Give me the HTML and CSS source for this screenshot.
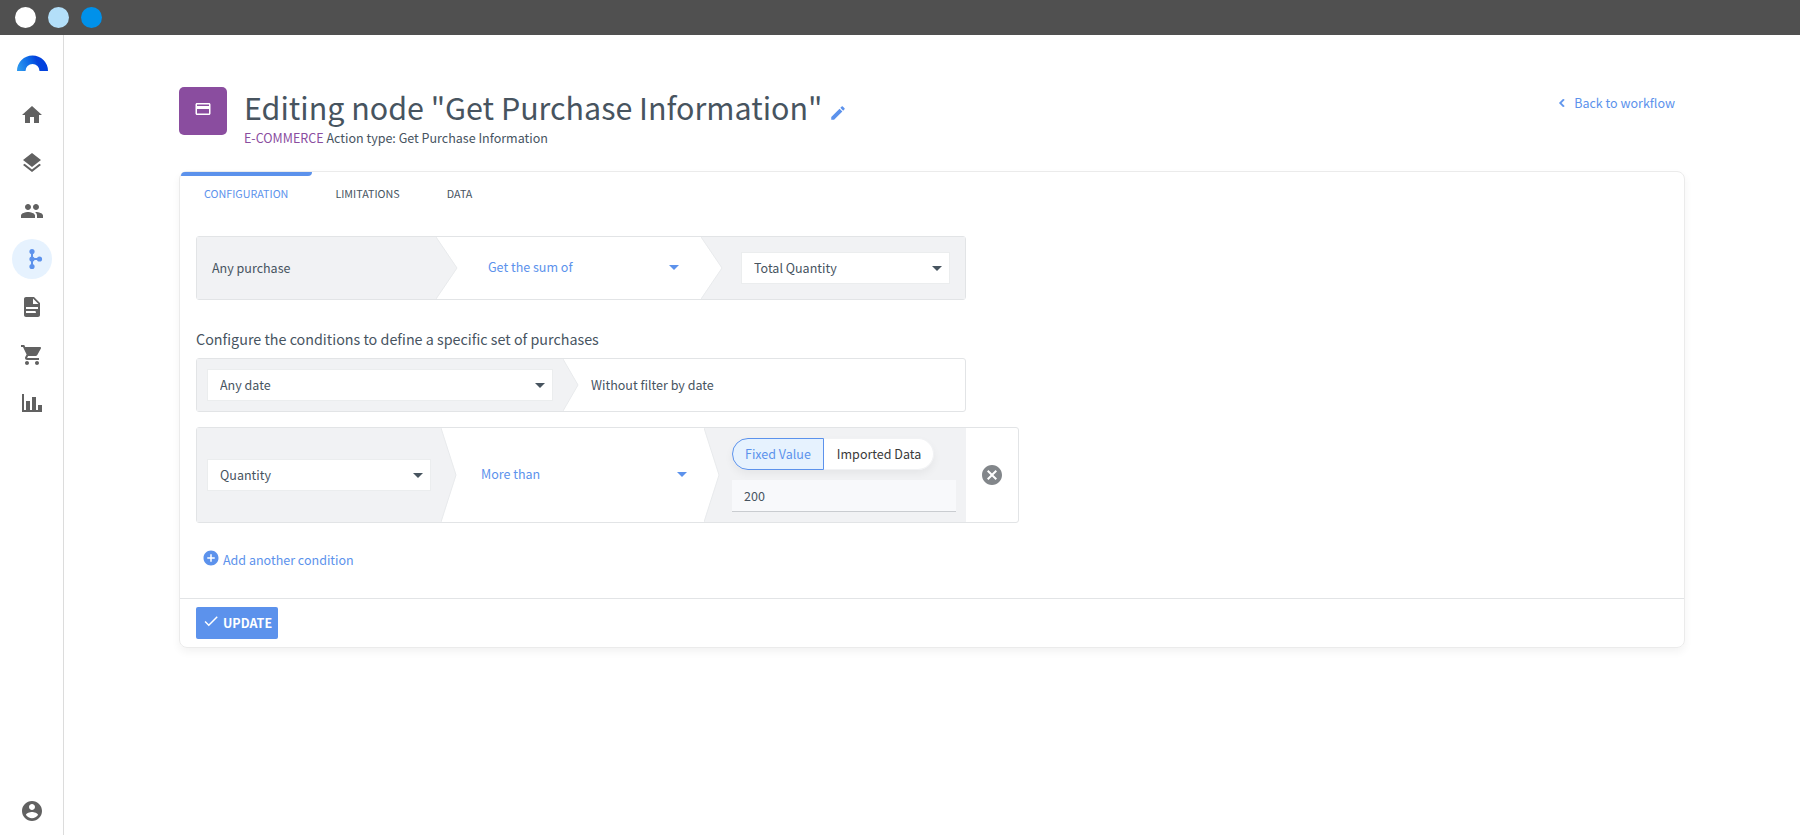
FILE: index.html
```html
<!DOCTYPE html>
<html lang="en">
<head>
<meta charset="utf-8">
<title>Editing node</title>
<link rel="stylesheet" href="styles.css">
</head>
<body>
<div class="topbar">
  <span class="dot dot-white"></span>
  <span class="dot dot-light"></span>
  <span class="dot dot-blue"></span>
</div>
<div class="shell">
  <nav class="sidebar" aria-label="Main">
    <a class="logo" href="#" aria-label="Dashboard">
      <svg width="32" height="16" viewBox="0 0 32 16">
        <defs><linearGradient id="arc" x1="0" x2="1" y1="0.5" y2="0.3"><stop offset="0" stop-color="#2b96ee"/><stop offset="0.45" stop-color="#0a63e6"/><stop offset="0.65" stop-color="#0443dc"/><stop offset="1" stop-color="#0040e0"/></linearGradient></defs>
        <path fill="url(#arc)" d="M1 16a15.5 15.5 0 0 1 31 0H23.500a7 7 0 0 0-14 0z"/>
      </svg>
    </a>
    <a class="nav-item" href="#" aria-label="Home"><svg viewBox="0 0 24 24"><path d="M10 20v-6h4v6h5v-8h3L12 3 2 12h3v8z"/></svg></a>
    <a class="nav-item" href="#" aria-label="Layers"><svg viewBox="0 0 24 24"><path d="M11.99 18.54l-7.37-5.73L3 14.07l9 7 9-7-1.63-1.27-7.38 5.74zM12 16l7.36-5.73L21 9l-9-7-9 7 1.63 1.27L12 16z"/></svg></a>
    <a class="nav-item" href="#" aria-label="Audience"><svg viewBox="0 0 24 24"><path d="M16 11c1.66 0 2.99-1.34 2.99-3S17.66 5 16 5c-1.66 0-3 1.34-3 3s1.34 3 3 3zm-8 0c1.66 0 2.99-1.34 2.99-3S9.66 5 8 5C6.34 5 5 6.34 5 8s1.34 3 3 3zm0 2c-2.33 0-7 1.17-7 3.5V19h14v-2.5c0-2.33-4.67-3.5-7-3.5zm8 0c-.29 0-.62.02-.97.05 1.16.84 1.97 1.97 1.97 3.45V19h6v-2.5c0-2.33-4.67-3.5-7-3.5z"/></svg></a>
    <a class="nav-item nav-active" href="#" aria-label="Workflows"><svg viewBox="0 0 24 24"><path d="M12 4.500v15M12 12h7.500" stroke="currentColor" stroke-width="2"/><circle cx="12" cy="4.500" r="2.600"/><circle cx="12" cy="12" r="2.600"/><circle cx="12" cy="19.500" r="2.600"/><circle cx="19.500" cy="12" r="2.600"/></svg></a>
    <a class="nav-item" href="#" aria-label="Documents"><svg viewBox="0 0 24 24"><path d="M14 2H6c-1.100 0-1.990.9-1.990 2L4 20c0 1.100.89 2 1.990 2H18c1.100 0 2-.9 2-2V8l-6-6zm2 16H6v-2h9.500zm2-4H6v-2h12zm-5-5V3.500L18.500 9H13z"/></svg></a>
    <a class="nav-item" href="#" aria-label="Commerce"><svg viewBox="0 0 24 24"><path d="M7 18c-1.100 0-1.990.9-1.990 2S5.900 22 7 22s2-.9 2-2-.9-2-2-2zM1 2v2h2l3.600 7.590-1.350 2.450c-.16.280-.25.610-.25.960 0 1.100.9 2 2 2h12v-2H7.420c-.14 0-.25-.11-.25-.25l.03-.12.900-1.630h7.450c.75 0 1.410-.41 1.750-1.030l3.580-6.490c.08-.14.120-.31.120-.480 0-.55-.45-1-1-1H5.210l-.94-2H1zm16 16c-1.100 0-1.990.9-1.990 2s.89 2 1.990 2 2-.9 2-2-.9-2-2-2z"/></svg></a>
    <a class="nav-item" href="#" aria-label="Statistics"><svg viewBox="0 0 24 24"><path d="M2 3h2v16h2v-9h4v9h2V6h4v13h2v-5h4v7H2z"/></svg></a>
    <a class="nav-item nav-account" href="#" aria-label="Account"><svg viewBox="0 0 24 24"><path d="M12 2C6.480 2 2 6.480 2 12s4.480 10 10 10 10-4.480 10-10S17.520 2 12 2zm0 3c1.660 0 3 1.340 3 3s-1.340 3-3 3-3-1.340-3-3 1.340-3 3-3zm0 14.200c-2.500 0-4.710-1.280-6-3.220.03-1.990 4-3.080 6-3.080 1.990 0 5.970 1.090 6 3.080-1.290 1.940-3.500 3.220-6 3.220z"/></svg></a>
  </nav>

  <main class="main">
    <header class="page-head">
      <div class="node-icon"><svg width="18" height="18" viewBox="0 0 24 24"><path fill="#fff" d="M20 4H4c-1.110 0-1.990.89-1.990 2L2 18c0 1.110.89 2 2 2h16c1.110 0 2-.89 2-2V6c0-1.110-.89-2-2-2zm0 14H4v-6h16v6zm0-10H4V6h16v2z"/></svg></div>
      <div class="head-text">
        <div class="title-row">
          <h1>Editing node "Get Purchase Information"</h1>
          <button class="icon-btn" type="button" aria-label="Edit name"><svg width="18" height="18" viewBox="0 0 24 24"><path fill="#5c92ec" d="M3 17.250V21h3.750L17.810 9.940l-3.750-3.750L3 17.250zM20.710 7.040c.39-.39.39-1.020 0-1.410l-2.340-2.340c-.39-.39-1.020-.39-1.410 0l-1.830 1.830 3.750 3.750 1.830-1.830z"/></svg></button>
        </div>
        <p class="subtitle"><span class="category">E-COMMERCE</span> Action type: Get Purchase Information</p>
      </div>
      <a class="back" href="#"><svg width="16" height="16" viewBox="0 0 24 24"><path fill="currentColor" stroke="currentColor" d="M15.410 7.410L14 6l-6 6 6 6 1.410-1.410L10.830 12z"/></svg>Back to workflow</a>
    </header>

    <section class="card">
      <div class="tabs" role="tablist">
        <button class="tab tab-active" type="button" role="tab" aria-selected="true">CONFIGURATION</button>
        <button class="tab" type="button" role="tab" aria-selected="false">LIMITATIONS</button>
        <button class="tab" type="button" role="tab" aria-selected="false">DATA</button>
      </div>

      <form class="card-body">
        <div class="rule rule-sum">
          <div class="cell gray cell-label">Any purchase</div>
          <svg class="chevron" viewBox="0 0 22 62" preserveAspectRatio="none"><path class="fill" d="M0 0L21 31L0 62z"/><path class="edge" d="M0 0L21 31L0 62"/></svg>
          <div class="cell cell-op"><span class="pick pick-link"><select aria-label="Operation"><option>Get the sum of</option></select></span></div>
          <svg class="chevron" viewBox="0 0 22 62" preserveAspectRatio="none"><path class="fill" d="M0 0H22V62H0L21 31z"/><path class="edge" d="M0 0L21 31L0 62"/></svg>
          <div class="cell gray cell-field"><span class="pick"><select aria-label="Field"><option>Total Quantity</option></select></span></div>
        </div>

        <h2>Configure the conditions to define a specific set of purchases</h2>

        <div class="rule rule-date">
          <div class="cell gray cell-date"><span class="pick"><select aria-label="Date"><option>Any date</option></select></span></div>
          <svg class="chevron chevron-small" viewBox="0 0 16 52" preserveAspectRatio="none"><path class="fill" d="M0 0L15 26L0 52z"/><path class="edge" d="M0 0L15 26L0 52"/></svg>
          <div class="cell cell-note">Without filter by date</div>
        </div>

        <div class="rule rule-quantity">
          <div class="cell gray cell-prop"><span class="pick"><select aria-label="Property"><option>Quantity</option></select></span></div>
          <svg class="chevron chevron-small" viewBox="0 0 16 94" preserveAspectRatio="none"><path class="fill" d="M0 0L15 47L0 94z"/><path class="edge" d="M0 0L15 47L0 94"/></svg>
          <div class="cell cell-compare"><span class="pick pick-link"><select aria-label="Comparison"><option>More than</option></select></span></div>
          <svg class="chevron chevron-small" viewBox="0 0 16 94" preserveAspectRatio="none"><path class="fill" d="M0 0H16V94H0L15 47z"/><path class="edge" d="M0 0L15 47L0 94"/></svg>
          <div class="cell gray cell-value">
            <div class="toggle">
              <button class="toggle-btn toggle-on" type="button">Fixed Value</button>
              <button class="toggle-btn" type="button">Imported Data</button>
            </div>
            <input class="value" type="text" value="200" aria-label="Value">
          </div>
          <div class="cell cell-remove"><button class="icon-btn" type="button" aria-label="Remove condition"><svg width="24" height="24" viewBox="0 0 24 24"><path fill="#82868a" d="M12 2C6.470 2 2 6.470 2 12s4.470 10 10 10 10-4.470 10-10S17.530 2 12 2zm5 13.590L15.590 17 12 13.410 8.410 17 7 15.590 10.590 12 7 8.410 8.410 7 12 10.590 15.590 7 17 8.410 13.410 12 17 15.590z"/></svg></button></div>
        </div>

        <button class="add" type="button"><svg width="18" height="18" viewBox="0 0 24 24"><path fill="currentColor" d="M12 2C6.480 2 2 6.480 2 12s4.480 10 10 10 10-4.480 10-10S17.520 2 12 2zm5 11h-4v4h-2v-4H7v-2h4V7h2v4h4v2z"/></svg>Add another condition</button>
      </form>

      <footer class="card-foot">
        <button class="update" type="button"><svg width="18" height="18" viewBox="0 0 24 24"><path fill="currentColor" d="M9 16.170L4.830 12l-1.420 1.410L9 19 21 7l-1.410-1.410z"/></svg>UPDATE</button>
      </footer>
    </section>
  </main>
</div>
</body>
</html>
```
FILE: styles.css
```css
* { box-sizing: border-box; }

body {
  margin: 0;
  min-height: 100vh;
  display: flex;
  flex-direction: column;
  background: #fff;
  color: #47545f;
  font: 14px/20px "Noto Sans CJK SC", "Noto Sans", sans-serif;
  font-size-adjust: 0.486;
}

button, input, select {
  font: inherit;
  font-size-adjust: inherit;
  color: inherit;
  margin: 0;
}

button { cursor: pointer; }
a { text-decoration: none; }
svg { display: block; flex: none; }

.topbar {
  height: 35px;
  padding: 0 15px 1px;
  display: flex;
  align-items: center;
  gap: 12px;
  background: #505050;
}

.dot { width: 21px; height: 21px; border-radius: 50%; }
.dot-white { background: #fff; }
.dot-light { background: #b3dff9; }
.dot-blue { background: #0091ea; }

.shell { flex: 1; display: flex; }

.sidebar {
  width: 64px;
  padding: 20px 0 4px 1px;
  border-right: 1px solid #dcdcdc;
  display: flex;
  flex-direction: column;
  align-items: center;
  gap: 8px;
}

.logo { margin-bottom: 16px; }

.nav-item {
  width: 40px;
  height: 40px;
  border-radius: 50%;
  display: flex;
  align-items: center;
  justify-content: center;
  color: #616161;
}

.nav-item svg { width: 24px; height: 24px; fill: currentColor; }
.nav-active { background: #e6f2fe; color: #5c92ec; }
.nav-account { margin-top: auto; }

.main { flex: 1; padding: 52px 115px 40px; }

.page-head { display: flex; gap: 17px; margin-bottom: 24px; }

.node-icon {
  width: 48px;
  height: 48px;
  padding-bottom: 4px;
  border-radius: 5px;
  background: #8a4d9f;
  display: flex;
  align-items: center;
  justify-content: center;
}

.head-text { flex: 1; }
.title-row { display: flex; align-items: flex-end; gap: 7px; }
h1 { margin: 0; font-size: 34px; font-weight: 400; line-height: 40px; }

.icon-btn { padding: 0; border: 0; background: none; }
.title-row .icon-btn { padding-bottom: 5px; }

.subtitle { margin: 2px 0 0; line-height: 18px; }
.category { color: #8a4d9f; }

.back {
  display: flex;
  align-items: center;
  align-self: flex-start;
  gap: 4px;
  padding: 6px 10px;
  color: #5c92ec;
}

.card {
  border: 1px solid #ebebeb;
  border-radius: 8px;
  box-shadow: 0 4px 8px rgba(0, 0, 0, 0.05);
}

.tabs { display: flex; padding-left: 1px; }

.tab {
  position: relative;
  padding: 12px 24px 8px 23px;
  border: 0;
  background: none;
  font-size: 12px;
  line-height: 20px;
}

.tab-active { color: #5c92ec; }

.tab-active::before {
  content: "";
  position: absolute;
  top: 0;
  left: 0;
  right: 0;
  height: 4px;
  border-radius: 4px 0;
  background: #5c92ec;
}

.card-body { padding: 24px 16px 27px; }

.rule {
  display: flex;
  width: 770px;
  max-width: 100%;
  border: 1px solid #e2e4e6;
  border-radius: 3px;
}

.cell { display: flex; align-items: center; min-width: 0; }
.gray { background: #f1f2f4; }

.chevron { width: 22px; height: auto; align-self: stretch; }
.chevron-small { width: 16px; }
.fill { fill: #f1f2f4; }
.edge { fill: none; stroke: #e8eaec; stroke-width: 1; }

.pick { position: relative; display: flex; flex: 1; min-width: 0; }

.pick::after {
  content: "";
  position: absolute;
  right: 8px;
  top: 14px;
  border: 5px solid transparent;
  border-top-color: #47545f;
  border-bottom: 0;
  pointer-events: none;
}

.pick select {
  appearance: none;
  width: 100%;
  height: 32px;
  padding: 0 24px 0 12px;
  border: 1px solid #ebedee;
  border-radius: 0;
  background: #fff;
}

.pick.pick-link select { padding-bottom: 2px; border-color: transparent; background: none; color: #5c92ec; }
.pick.pick-link::after { top: 13px; border-top-color: #5c92ec; }

.cell-label { flex: 1 1 239px; padding-left: 15px; }
.cell-op { flex: 1 1 243px; padding: 0 14px 0 17px; }
.cell-field { flex: 1 1 242px; padding: 15px 15px 15px 18px; }

h2 { margin: 28px 0 9px; font-size: 16px; font-weight: 400; line-height: 21px; }

.cell-date { flex: 1 1 366px; padding: 10px; }
.cell-note { flex: 1 1 386px; padding-left: 12px; }

.rule-quantity { width: 823px; margin-top: 15px; }
.cell-prop { flex: 1 1 244px; padding: 0 10px; }
.cell-compare { flex: 1 1 247px; padding: 0 9px 0 11px; }
.cell-value {
  flex: 1 1 246px;
  padding: 10px 10px 10px 12px;
  flex-direction: column;
  align-items: stretch;
  gap: 10px;
}
.cell-remove { flex: 1 1 52px; justify-content: center; }

.toggle { display: flex; align-self: flex-start; border-radius: 16px; box-shadow: 0 4px 8px rgba(0, 0, 0, 0.05); }

.toggle-btn {
  height: 32px;
  padding: 0 12px 0 13px;
  border: 1px solid #f1f2f4;
  border-left: 0;
  border-radius: 0 16px 16px 0;
  background: #fff;
  color: #3a3a3a;
  white-space: nowrap;
}

.toggle-on {
  padding: 0 12px;
  border: 1px solid #5c92ec;
  border-radius: 16px 0 0 16px;
  background: #e6f2fe;
  color: #5c92ec;
}

.value {
  width: 100%;
  height: 32px;
  padding: 0 12px;
  border: 0;
  border-bottom: 1px solid #c9ccd0;
  background: #f8f9fb;
}

.add {
  display: flex;
  align-items: flex-start;
  gap: 3px;
  margin-top: 26px;
  padding: 0 6px;
  border: 0;
  background: none;
  color: #5c92ec;
  line-height: 22px;
}

.card-foot { padding: 8px 16px; border-top: 1px solid #e2e4e6; }

.update {
  display: flex;
  align-items: flex-start;
  gap: 3px;
  height: 32px;
  padding: 5px 6px;
  border: 0;
  border-radius: 2px;
  background: #5c92ec;
  color: #fff;
  font-weight: 700;
  line-height: 22px;
}
```
